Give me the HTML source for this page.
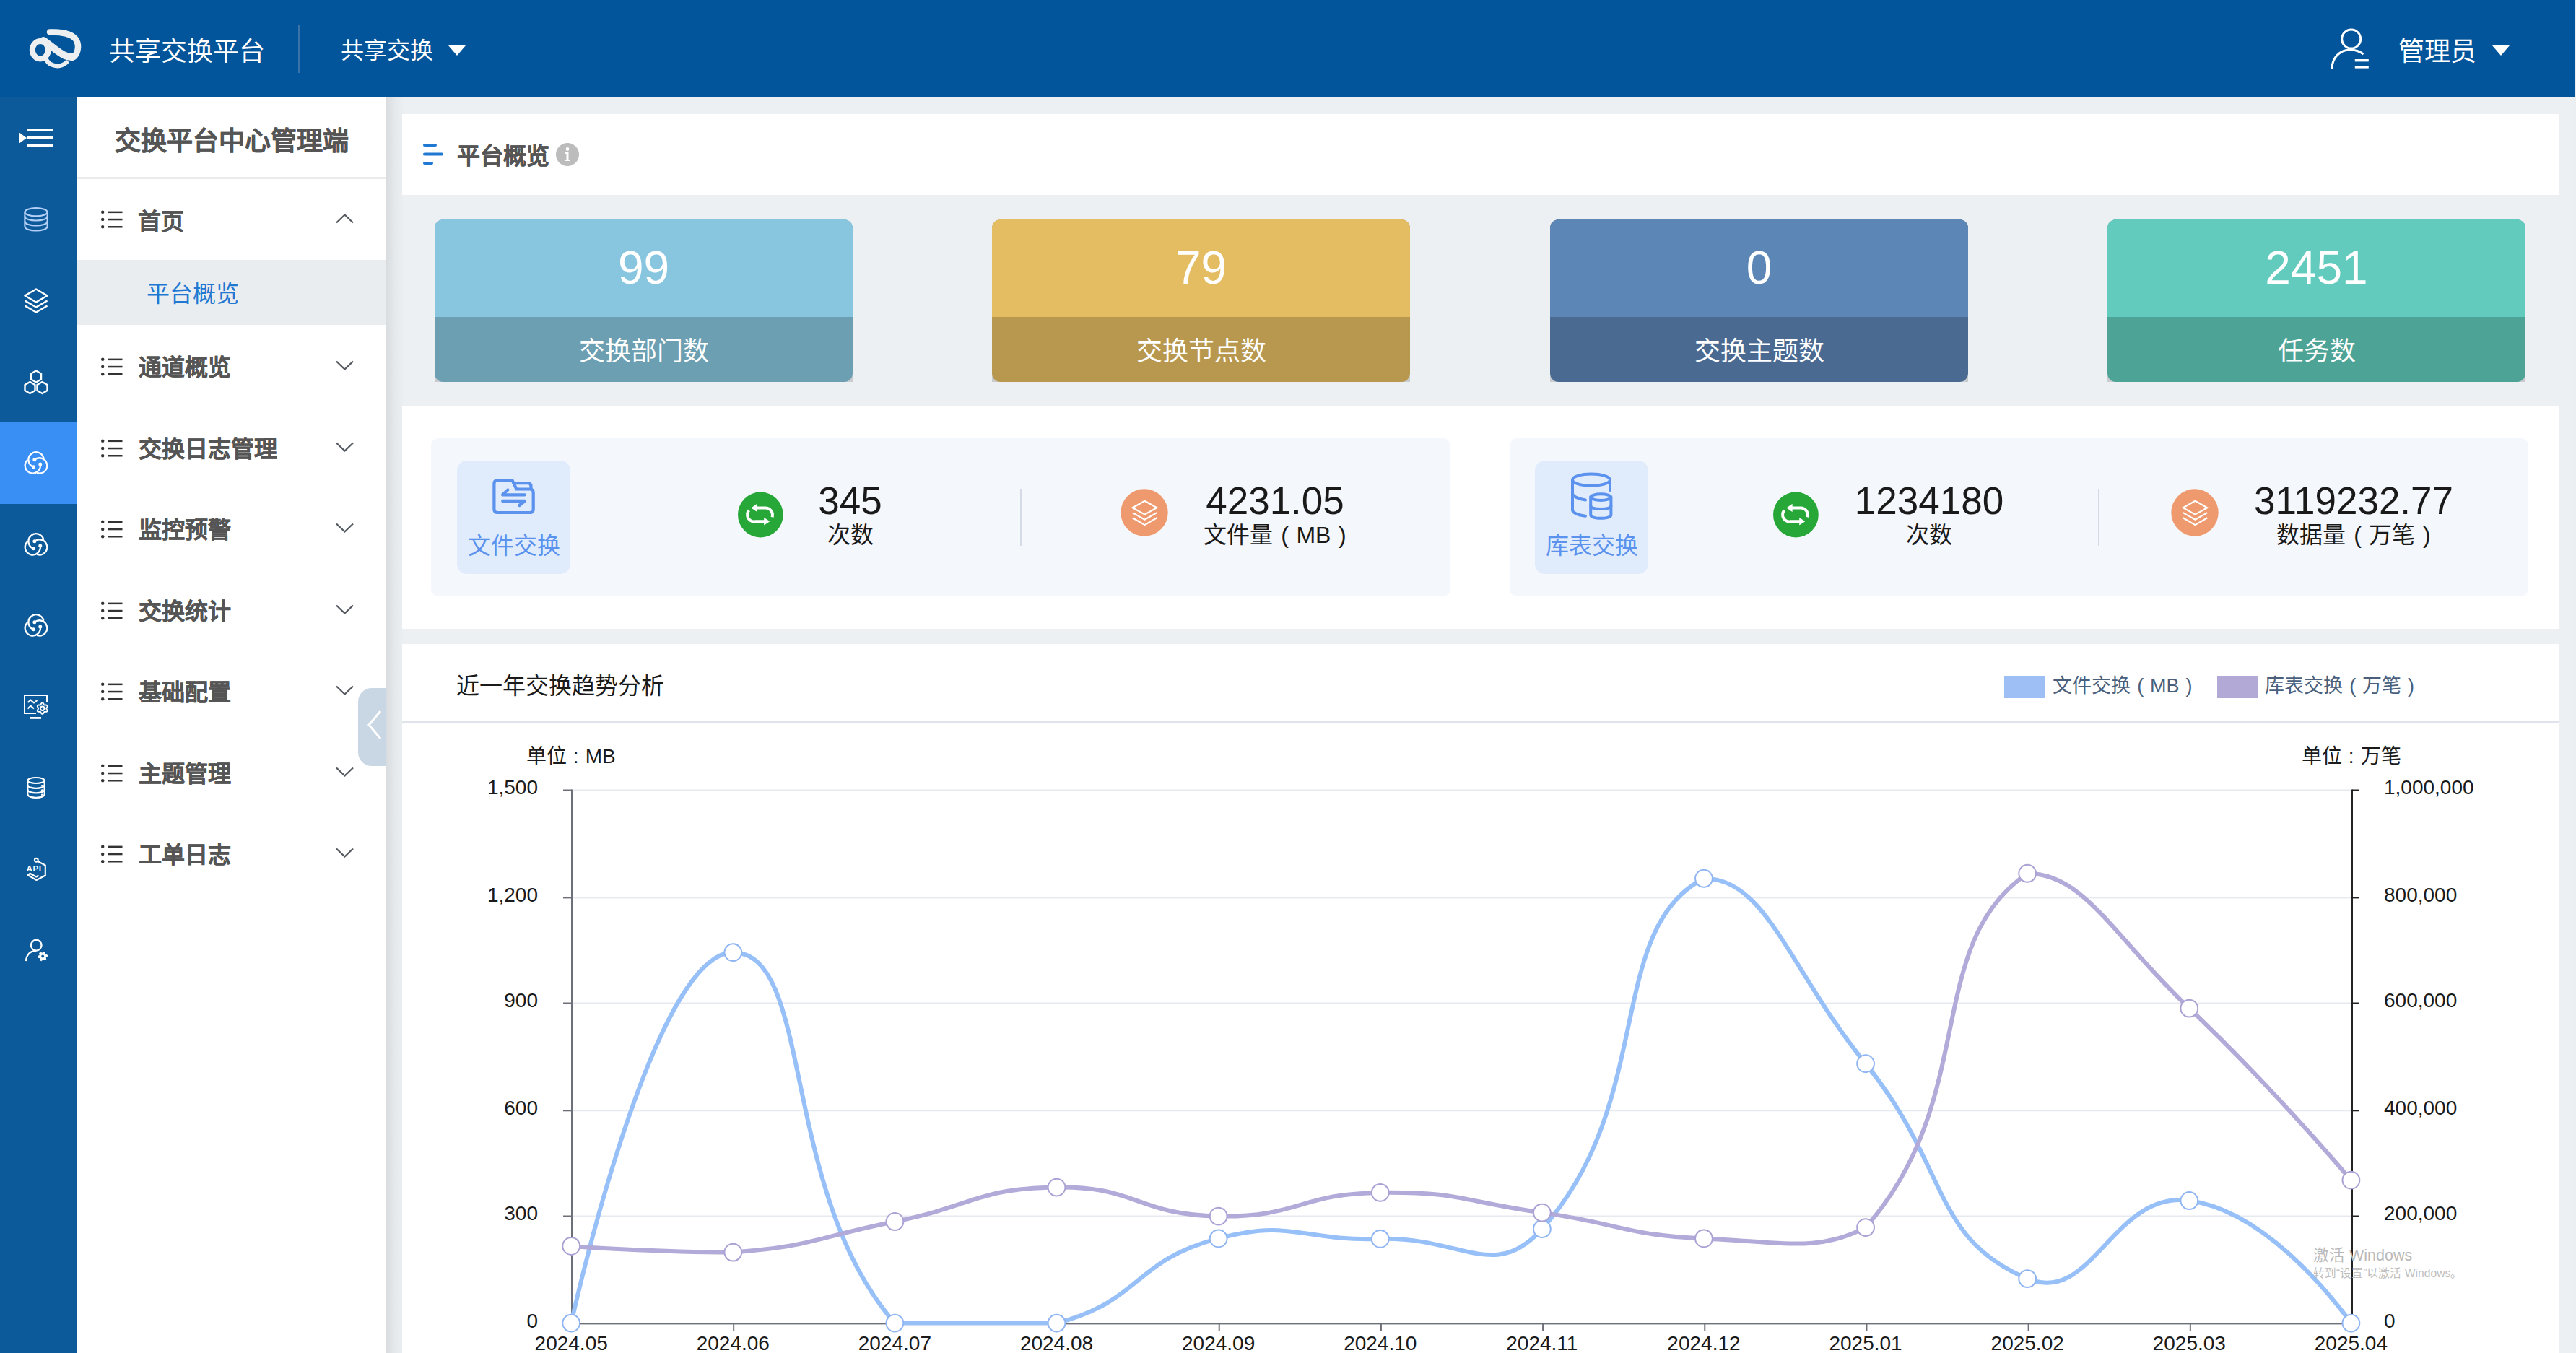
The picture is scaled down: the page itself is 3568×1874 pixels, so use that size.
<!DOCTYPE html>
<html lang="zh-CN"><head><meta charset="utf-8"><title>共享交换平台</title>
<style>
html,body{margin:0;padding:0;}
body{width:3568px;height:1874px;overflow:hidden;position:relative;background:#edf0f3;font-family:"Liberation Sans", sans-serif;}
.r{position:absolute;z-index:1}
.t{position:absolute;white-space:nowrap;line-height:1;z-index:6}
.pl{margin:0 0.33em 0 0.34em;} .pr{margin:0 0 0 0.33em;} .cl{margin:0 0.33em 0 0.31em;}
</style></head><body>
<div class="r" style="left:0px;top:0px;width:3566px;height:135px;background:#02559a;z-index:5"></div>
<div class="r" style="left:0px;top:134px;width:3566px;height:1px;background:#014b8c;z-index:5"></div>
<div class="r" style="left:3566px;top:0px;width:2px;height:1874px;background:#eceef0;z-index:5"></div>
<svg class="r" style="left:30px;top:30px;z-index:6" width="95" height="75" viewBox="30 30 95 75">
<g fill="none" stroke="#eceef0" stroke-linecap="round">
<ellipse cx="55.8" cy="69.3" rx="11" ry="12.2" stroke-width="8"/>
<path d="M60 56 C70 62 80 73 90 77 C95 79 99 79 102 78" stroke-width="10"/>
<path d="M69 44.5 C85 44 101 47 106 56 C110 64 108 76 100 80" stroke-width="8.5"/>
<path d="M63.5 81 C66 88 72 91 80 91.5 C85 91.5 89 89 92 86.5" stroke-width="6"/>
</g>
<path d="M67 41 C80 40 92 41 100 45 L96 49 C88 47 78 47 67 41 Z" fill="#eceef0"/>
</svg>
<div class="t" style="left:151px;top:54px;font-size:36px;color:#fff;font-weight:normal;">共享交换平台</div>
<div class="r" style="left:413px;top:34px;width:2px;height:67px;background:#3a72aa;z-index:6"></div>
<div class="t" style="left:472px;top:53.5px;font-size:32px;color:#fff;font-weight:normal;">共享交换</div>
<svg class="r" style="left:620px;top:62px;z-index:6" width="26" height="16"><path d="M1 1 L25 1 L13 15 Z" fill="#fff"/></svg>
<svg class="r" style="left:3225px;top:38px;z-index:6" width="62" height="62" viewBox="0 0 62 62">
<circle cx="31.7" cy="16" r="13" fill="none" stroke="#fff" stroke-width="3"/>
<path d="M5 57 C5 42 16 31 30 31 C38 31 44 33.5 48.6 37" fill="none" stroke="#fff" stroke-width="3"/>
<rect x="36.8" y="44" width="19" height="3.4" fill="#fff"/><rect x="36.8" y="53.4" width="19" height="3.2" fill="#fff"/>
</svg>
<div class="t" style="left:3322px;top:54px;font-size:36px;color:#fff;font-weight:normal;">管理员</div>
<svg class="r" style="left:3451px;top:62px;z-index:6" width="26" height="16"><path d="M1 1 L25 1 L13 15 Z" fill="#fff"/></svg>
<div class="r" style="left:0px;top:135px;width:107px;height:1739px;background:#0d5a9a;"></div>
<div class="r" style="left:0px;top:585px;width:107px;height:113px;background:#3a8ff5;"></div>
<svg class="r" style="left:0;top:135px" width="107" height="1739" viewBox="0 135 107 1739">
<path d="M26 183 L37 191 L26 199 Z" fill="#fff"/>
<rect x="38" y="178" width="36" height="4" fill="#fff"/><rect x="38" y="189" width="36" height="4" fill="#fff"/><rect x="38" y="200" width="36" height="4" fill="#fff"/>
<g fill="none" stroke="#b4d0f7" stroke-width="2.1">
<ellipse cx="50" cy="293.7" rx="15.6" ry="5.6"/>
<path d="M34.4 293.7 V313.5 C34.4 321.5 65.6 321.5 65.6 313.5 V293.7"/>
<path d="M34.4 299.5 C34.4 307.5 65.6 307.5 65.6 299.5"/>
<path d="M34.4 306.5 C34.4 314.5 65.6 314.5 65.6 306.5"/>
</g>
<g fill="none" stroke="#fff" stroke-width="2.6" stroke-linejoin="round">
<path d="M50 400.5 L65.5 409.5 L50 418.5 L34.5 409.5 Z"/>
<path d="M34.5 416.5 L50 425.5 L65.5 416.5"/>
<path d="M34.5 423.5 L50 432.5 L65.5 423.5"/>
</g>
<g fill="none" stroke="#fff" stroke-width="2.4" stroke-linejoin="round">
<path d="M50 513.5 L57 517.5 L57 525.5 L50 529.5 L43 525.5 L43 517.5 Z"/>
<path d="M41.5 529 L48.5 533 L48.5 541 L41.5 545 L34.5 541 L34.5 533 Z"/>
<path d="M58.5 529 L65.5 533 L65.5 541 L58.5 545 L51.5 541 L51.5 533 Z"/>
</g>
<path d="M46.37 646.76 A10.6 10.6 0 1 1 60.19 633.88" fill="none" stroke="#fff" stroke-width="2.3" stroke-linecap="round"/><circle cx="46.37" cy="646.76" r="2.5" fill="#fff"/><path d="M47.86 636.78 A10.6 10.6 0 1 1 52.11 655.19" fill="none" stroke="#fff" stroke-width="2.3" stroke-linecap="round"/><circle cx="47.86" cy="636.78" r="2.5" fill="#fff"/><path d="M55.76 643.06 A10.6 10.6 0 1 1 37.70 637.54" fill="none" stroke="#fff" stroke-width="2.3" stroke-linecap="round"/><circle cx="55.76" cy="643.06" r="2.5" fill="#fff"/>
<path d="M46.37 759.76 A10.6 10.6 0 1 1 60.19 746.88" fill="none" stroke="#fff" stroke-width="2.3" stroke-linecap="round"/><circle cx="46.37" cy="759.76" r="2.5" fill="#fff"/><path d="M47.86 749.78 A10.6 10.6 0 1 1 52.11 768.19" fill="none" stroke="#fff" stroke-width="2.3" stroke-linecap="round"/><circle cx="47.86" cy="749.78" r="2.5" fill="#fff"/><path d="M55.76 756.06 A10.6 10.6 0 1 1 37.70 750.54" fill="none" stroke="#fff" stroke-width="2.3" stroke-linecap="round"/><circle cx="55.76" cy="756.06" r="2.5" fill="#fff"/>
<path d="M46.37 871.76 A10.6 10.6 0 1 1 60.19 858.88" fill="none" stroke="#fff" stroke-width="2.3" stroke-linecap="round"/><circle cx="46.37" cy="871.76" r="2.5" fill="#fff"/><path d="M47.86 861.78 A10.6 10.6 0 1 1 52.11 880.19" fill="none" stroke="#fff" stroke-width="2.3" stroke-linecap="round"/><circle cx="47.86" cy="861.78" r="2.5" fill="#fff"/><path d="M55.76 868.06 A10.6 10.6 0 1 1 37.70 862.54" fill="none" stroke="#fff" stroke-width="2.3" stroke-linecap="round"/><circle cx="55.76" cy="868.06" r="2.5" fill="#fff"/>
<g fill="none" stroke="#fff" stroke-width="2">
<path d="M50 988 H34 V963 H65 V973"/>
<path d="M38.5 973 L42.5 969.5 L47 973.5 L51.5 970"/>
<path d="M38.5 981.5 L42.5 977.5 L47 981.5"/>
<circle cx="58.7" cy="981.2" r="2.8"/>
</g>
<path d="M58.70 988.90 L58.30 988.84 L57.92 988.65 L57.57 988.36 L57.26 987.99 L56.99 987.58 L56.77 987.15 L56.57 986.76 L56.38 986.42 L56.18 986.15 L55.95 985.96 L55.68 985.86 L55.34 985.82 L54.95 985.83 L54.51 985.85 L54.03 985.87 L53.54 985.84 L53.07 985.76 L52.64 985.60 L52.29 985.36 L52.03 985.05 L51.89 984.67 L51.86 984.25 L51.93 983.80 L52.10 983.34 L52.32 982.91 L52.58 982.50 L52.82 982.13 L53.02 981.80 L53.15 981.49 L53.20 981.20 L53.15 980.91 L53.02 980.60 L52.82 980.27 L52.58 979.90 L52.32 979.49 L52.10 979.06 L51.93 978.60 L51.86 978.15 L51.89 977.73 L52.03 977.35 L52.29 977.04 L52.64 976.80 L53.07 976.64 L53.54 976.56 L54.03 976.53 L54.51 976.55 L54.95 976.57 L55.34 976.58 L55.68 976.54 L55.95 976.44 L56.18 976.25 L56.38 975.98 L56.57 975.64 L56.77 975.25 L56.99 974.82 L57.26 974.41 L57.57 974.04 L57.92 973.75 L58.30 973.56 L58.70 973.50 L59.10 973.56 L59.48 973.75 L59.83 974.04 L60.14 974.41 L60.41 974.82 L60.63 975.25 L60.83 975.64 L61.02 975.98 L61.22 976.25 L61.45 976.44 L61.72 976.54 L62.06 976.58 L62.45 976.57 L62.89 976.55 L63.37 976.53 L63.86 976.56 L64.33 976.64 L64.76 976.80 L65.11 977.04 L65.37 977.35 L65.51 977.73 L65.54 978.15 L65.47 978.60 L65.30 979.06 L65.08 979.49 L64.82 979.90 L64.58 980.27 L64.38 980.60 L64.25 980.91 L64.20 981.20 L64.25 981.49 L64.38 981.80 L64.58 982.13 L64.82 982.50 L65.08 982.91 L65.30 983.34 L65.47 983.80 L65.54 984.25 L65.51 984.67 L65.37 985.05 L65.11 985.36 L64.76 985.60 L64.33 985.76 L63.86 985.84 L63.37 985.87 L62.89 985.85 L62.45 985.83 L62.06 985.82 L61.72 985.86 L61.45 985.96 L61.22 986.15 L61.02 986.42 L60.83 986.76 L60.63 987.15 L60.41 987.58 L60.14 987.99 L59.83 988.36 L59.48 988.65 L59.10 988.84 L58.70 988.90Z" fill="none" stroke="#fff" stroke-width="1.9" stroke-linejoin="round"/>
<rect x="42" y="993" width="15" height="2.8" fill="#fff"/>
<g fill="none" stroke="#fff" stroke-width="2.2">
<ellipse cx="50" cy="1081" rx="11.7" ry="4"/>
<path d="M38.3 1081 V1100 C38.3 1106.5 61.7 1106.5 61.7 1100 V1081"/>
<path d="M38.3 1087 C38.3 1093.5 61.7 1093.5 61.7 1087"/>
<path d="M38.3 1093.5 C38.3 1100 61.7 1100 61.7 1093.5"/>
</g>
<circle cx="58.2" cy="1088.2" r="1.3" fill="#fff"/><circle cx="58.2" cy="1094.5" r="1.3" fill="#fff"/><circle cx="58.2" cy="1100.8" r="1.3" fill="#fff"/>
<g fill="none" stroke="#fff" stroke-width="2.1" stroke-linejoin="round">
<circle cx="50.3" cy="1191.3" r="2.4"/>
<path d="M52.3 1193 L62.8 1198.5 V1212.5 L50.5 1219 L38.5 1212 L41.5 1209.8 L50.3 1214.5 L53.5 1212.5"/>
</g>
<text x="36.6" y="1207.4" font-family="Liberation Sans" font-weight="bold" font-size="11.6" fill="#fff" textLength="20.5">API</text>
<g fill="none" stroke="#fff" stroke-width="2.3">
<circle cx="50.2" cy="1309.3" r="7.3"/>
<path d="M35.8 1331 C37 1322 42 1317 50 1316.8"/>
</g>
<path d="M65.38 1322.84 L65.60 1324.50 L63.64 1325.69 L63.18 1326.80 L63.73 1329.03 L62.40 1330.04 L60.39 1328.94 L59.20 1329.10 L57.54 1330.68 L56.00 1330.04 L55.95 1327.75 L55.22 1326.80 L53.02 1326.16 L52.80 1324.50 L54.76 1323.31 L55.22 1322.20 L54.67 1319.97 L56.00 1318.96 L58.01 1320.06 L59.20 1319.90 L60.86 1318.32 L62.40 1318.96 L62.45 1321.25 L63.18 1322.20Z" fill="#fff" stroke="#fff" stroke-width="1" stroke-linejoin="round"/>
<circle cx="59.2" cy="1324.5" r="1.9" fill="#0d5a9a"/>
</svg>
<div class="r" style="left:107px;top:135px;width:427px;height:1739px;background:#fff;"></div>
<div class="r" style="left:534px;top:135px;width:26px;height:1739px;background:linear-gradient(to right, rgba(0,0,0,0.085), rgba(0,0,0,0.03) 50%, rgba(0,0,0,0));"></div>
<div class="r" style="left:107px;top:245px;width:427px;height:3px;background:#ebebeb;"></div>
<div class="t" style="left:159px;top:178px;font-size:36px;color:#555;font-weight:900;-webkit-text-stroke:0.3px #555">交换平台中心管理端</div>
<svg class="r" style="left:138px;top:290px" width="34" height="28" viewBox="0 0 34 28">
<circle cx="4.2" cy="3.8" r="2.2" fill="#333"/><circle cx="4.2" cy="14" r="2.2" fill="#333"/><circle cx="4.2" cy="24.2" r="2.2" fill="#333"/>
<rect x="11" y="2.6" width="20.5" height="2.5" fill="#333"/><rect x="11" y="12.8" width="20.5" height="2.5" fill="#333"/><rect x="11" y="23" width="20.5" height="2.5" fill="#333"/>
</svg>
<div class="t" style="left:191px;top:290.5px;font-size:32px;color:#555;font-weight:900;-webkit-text-stroke:0.3px #555">首页</div>
<svg class="r" style="left:464px;top:294.5px" width="28" height="16"><path d="M2 13.5 L13.5 2.5 L25 13.5" fill="none" stroke="#555a60" stroke-width="2.3"/></svg>
<div class="r" style="left:107px;top:360px;width:427px;height:90px;background:#e9edf0;"></div>
<div class="t" style="left:203px;top:390.5px;font-size:32px;color:#1f78d2;font-weight:normal;">平台概览</div>
<svg class="r" style="left:138px;top:494.0px" width="34" height="28" viewBox="0 0 34 28">
<circle cx="4.2" cy="3.8" r="2.2" fill="#333"/><circle cx="4.2" cy="14" r="2.2" fill="#333"/><circle cx="4.2" cy="24.2" r="2.2" fill="#333"/>
<rect x="11" y="2.6" width="20.5" height="2.5" fill="#333"/><rect x="11" y="12.8" width="20.5" height="2.5" fill="#333"/><rect x="11" y="23" width="20.5" height="2.5" fill="#333"/>
</svg>
<div class="t" style="left:192px;top:493.0px;font-size:32px;color:#555;font-weight:900;-webkit-text-stroke:0.3px #555">通道概览</div>
<svg class="r" style="left:464px;top:498.0px" width="28" height="16"><path d="M2 2.5 L13.5 13.5 L25 2.5" fill="none" stroke="#555a60" stroke-width="2.3"/></svg>
<svg class="r" style="left:138px;top:606.5px" width="34" height="28" viewBox="0 0 34 28">
<circle cx="4.2" cy="3.8" r="2.2" fill="#333"/><circle cx="4.2" cy="14" r="2.2" fill="#333"/><circle cx="4.2" cy="24.2" r="2.2" fill="#333"/>
<rect x="11" y="2.6" width="20.5" height="2.5" fill="#333"/><rect x="11" y="12.8" width="20.5" height="2.5" fill="#333"/><rect x="11" y="23" width="20.5" height="2.5" fill="#333"/>
</svg>
<div class="t" style="left:192px;top:605.5px;font-size:32px;color:#555;font-weight:900;-webkit-text-stroke:0.3px #555">交换日志管理</div>
<svg class="r" style="left:464px;top:610.5px" width="28" height="16"><path d="M2 2.5 L13.5 13.5 L25 2.5" fill="none" stroke="#555a60" stroke-width="2.3"/></svg>
<svg class="r" style="left:138px;top:719.0px" width="34" height="28" viewBox="0 0 34 28">
<circle cx="4.2" cy="3.8" r="2.2" fill="#333"/><circle cx="4.2" cy="14" r="2.2" fill="#333"/><circle cx="4.2" cy="24.2" r="2.2" fill="#333"/>
<rect x="11" y="2.6" width="20.5" height="2.5" fill="#333"/><rect x="11" y="12.8" width="20.5" height="2.5" fill="#333"/><rect x="11" y="23" width="20.5" height="2.5" fill="#333"/>
</svg>
<div class="t" style="left:192px;top:718.0px;font-size:32px;color:#555;font-weight:900;-webkit-text-stroke:0.3px #555">监控预警</div>
<svg class="r" style="left:464px;top:723.0px" width="28" height="16"><path d="M2 2.5 L13.5 13.5 L25 2.5" fill="none" stroke="#555a60" stroke-width="2.3"/></svg>
<svg class="r" style="left:138px;top:831.5px" width="34" height="28" viewBox="0 0 34 28">
<circle cx="4.2" cy="3.8" r="2.2" fill="#333"/><circle cx="4.2" cy="14" r="2.2" fill="#333"/><circle cx="4.2" cy="24.2" r="2.2" fill="#333"/>
<rect x="11" y="2.6" width="20.5" height="2.5" fill="#333"/><rect x="11" y="12.8" width="20.5" height="2.5" fill="#333"/><rect x="11" y="23" width="20.5" height="2.5" fill="#333"/>
</svg>
<div class="t" style="left:192px;top:830.5px;font-size:32px;color:#555;font-weight:900;-webkit-text-stroke:0.3px #555">交换统计</div>
<svg class="r" style="left:464px;top:835.5px" width="28" height="16"><path d="M2 2.5 L13.5 13.5 L25 2.5" fill="none" stroke="#555a60" stroke-width="2.3"/></svg>
<svg class="r" style="left:138px;top:944.0px" width="34" height="28" viewBox="0 0 34 28">
<circle cx="4.2" cy="3.8" r="2.2" fill="#333"/><circle cx="4.2" cy="14" r="2.2" fill="#333"/><circle cx="4.2" cy="24.2" r="2.2" fill="#333"/>
<rect x="11" y="2.6" width="20.5" height="2.5" fill="#333"/><rect x="11" y="12.8" width="20.5" height="2.5" fill="#333"/><rect x="11" y="23" width="20.5" height="2.5" fill="#333"/>
</svg>
<div class="t" style="left:192px;top:943.0px;font-size:32px;color:#555;font-weight:900;-webkit-text-stroke:0.3px #555">基础配置</div>
<svg class="r" style="left:464px;top:948.0px" width="28" height="16"><path d="M2 2.5 L13.5 13.5 L25 2.5" fill="none" stroke="#555a60" stroke-width="2.3"/></svg>
<svg class="r" style="left:138px;top:1056.5px" width="34" height="28" viewBox="0 0 34 28">
<circle cx="4.2" cy="3.8" r="2.2" fill="#333"/><circle cx="4.2" cy="14" r="2.2" fill="#333"/><circle cx="4.2" cy="24.2" r="2.2" fill="#333"/>
<rect x="11" y="2.6" width="20.5" height="2.5" fill="#333"/><rect x="11" y="12.8" width="20.5" height="2.5" fill="#333"/><rect x="11" y="23" width="20.5" height="2.5" fill="#333"/>
</svg>
<div class="t" style="left:192px;top:1055.5px;font-size:32px;color:#555;font-weight:900;-webkit-text-stroke:0.3px #555">主题管理</div>
<svg class="r" style="left:464px;top:1060.5px" width="28" height="16"><path d="M2 2.5 L13.5 13.5 L25 2.5" fill="none" stroke="#555a60" stroke-width="2.3"/></svg>
<svg class="r" style="left:138px;top:1169.0px" width="34" height="28" viewBox="0 0 34 28">
<circle cx="4.2" cy="3.8" r="2.2" fill="#333"/><circle cx="4.2" cy="14" r="2.2" fill="#333"/><circle cx="4.2" cy="24.2" r="2.2" fill="#333"/>
<rect x="11" y="2.6" width="20.5" height="2.5" fill="#333"/><rect x="11" y="12.8" width="20.5" height="2.5" fill="#333"/><rect x="11" y="23" width="20.5" height="2.5" fill="#333"/>
</svg>
<div class="t" style="left:192px;top:1168.0px;font-size:32px;color:#555;font-weight:900;-webkit-text-stroke:0.3px #555">工单日志</div>
<svg class="r" style="left:464px;top:1173.0px" width="28" height="16"><path d="M2 2.5 L13.5 13.5 L25 2.5" fill="none" stroke="#555a60" stroke-width="2.3"/></svg>
<div class="r" style="left:496px;top:953px;width:38px;height:108px;background:#c9d6e3;border-radius:19px 0 0 19px"></div>
<svg class="r" style="left:505px;top:982px" width="26" height="46"><path d="M22 3 L6 22 L22 41" fill="none" stroke="#fff" stroke-width="3"/></svg>
<div class="r" style="left:557px;top:158px;width:2987px;height:112px;background:#fff;"></div>
<svg class="r" style="left:584px;top:197px" width="34" height="34">
<rect x="2" y="2" width="19" height="4" rx="2" fill="#1f78d2"/><rect x="2" y="14.5" width="28" height="4" rx="2" fill="#1f78d2"/><rect x="2" y="27" width="14" height="4" rx="2" fill="#1f78d2"/></svg>
<div class="t" style="left:633px;top:200px;font-size:32px;color:#555;font-weight:900;-webkit-text-stroke:0.3px #555">平台概览</div>
<svg class="r" style="left:770px;top:198px" width="32" height="32"><circle cx="16" cy="16" r="16" fill="#bcbcbc"/><circle cx="16" cy="8.5" r="2.4" fill="#fff"/><path d="M12.5 13 H17.5 V23 H19.5 V25 H12.5 V23 H14.5 V15 H12.5 Z" fill="#fff"/></svg>
<div class="r" style="left:602px;top:516px;width:579px;height:13px;background:#c9cccf;"></div>
<div class="r" style="left:602px;top:304px;width:579px;height:225px;border-radius:12px;overflow:hidden;background:#6c9fb2;"><div class="r" style="left:0;top:0;width:579px;height:135px;background:#88c6e0"></div></div>
<div class="t" style="left:591.5px;top:339px;width:600px;text-align:center;font-size:64px;color:#fff;font-weight:normal;">99</div>
<div class="t" style="left:591.5px;top:468.5px;width:600px;text-align:center;font-size:36px;color:#fff;font-weight:normal;">交换部门数</div>
<div class="r" style="left:1374px;top:516px;width:579px;height:13px;background:#c9cccf;"></div>
<div class="r" style="left:1374px;top:304px;width:579px;height:225px;border-radius:12px;overflow:hidden;background:#b8984e;"><div class="r" style="left:0;top:0;width:579px;height:135px;background:#e4bd63"></div></div>
<div class="t" style="left:1363.5px;top:339px;width:600px;text-align:center;font-size:64px;color:#fff;font-weight:normal;">79</div>
<div class="t" style="left:1363.5px;top:468.5px;width:600px;text-align:center;font-size:36px;color:#fff;font-weight:normal;">交换节点数</div>
<div class="r" style="left:2147px;top:516px;width:579px;height:13px;background:#c9cccf;"></div>
<div class="r" style="left:2147px;top:304px;width:579px;height:225px;border-radius:12px;overflow:hidden;background:#4a6a91;"><div class="r" style="left:0;top:0;width:579px;height:135px;background:#5b86b5"></div></div>
<div class="t" style="left:2136.5px;top:339px;width:600px;text-align:center;font-size:64px;color:#fff;font-weight:normal;">0</div>
<div class="t" style="left:2136.5px;top:468.5px;width:600px;text-align:center;font-size:36px;color:#fff;font-weight:normal;">交换主题数</div>
<div class="r" style="left:2919px;top:516px;width:579px;height:13px;background:#c9cccf;"></div>
<div class="r" style="left:2919px;top:304px;width:579px;height:225px;border-radius:12px;overflow:hidden;background:#4ea397;"><div class="r" style="left:0;top:0;width:579px;height:135px;background:#62cbbd"></div></div>
<div class="t" style="left:2908.5px;top:339px;width:600px;text-align:center;font-size:64px;color:#fff;font-weight:normal;">2451</div>
<div class="t" style="left:2908.5px;top:468.5px;width:600px;text-align:center;font-size:36px;color:#fff;font-weight:normal;">任务数</div>
<div class="r" style="left:557px;top:563px;width:2987px;height:308px;background:#fff;"></div>
<div class="r" style="left:597px;top:607px;width:1412px;height:219px;background:#f4f7fc;border-radius:10px"></div>
<div class="r" style="left:633px;top:638px;width:157px;height:157px;background:#e0ebfb;border-radius:14px"></div>
<svg class="r" style="left:676px;top:655px" width="70" height="65" viewBox="676 655 70 65">
<g fill="none" stroke="#5b92ee" stroke-width="4.2" stroke-linecap="round" stroke-linejoin="round">
<path d="M715.4 677.5 L709.6 665.3 H689 Q684.4 665.3 684.4 670 V705.5 Q684.4 710 689 710 H734.2 Q738.7 710 738.7 705.5 V682 Q738.7 677.5 734.2 677.5 Z"/>
<path d="M711.6 669.2 H731 Q735.5 669.2 735.5 673.7 V677"/>
<path d="M696 685.3 H726.9 M696 685.3 L703.4 678.5"/>
<path d="M696.2 693.9 H726.9 L719.4 700"/>
</g></svg>
<div class="t" style="left:611.5px;top:740px;width:200px;text-align:center;font-size:32px;color:#5b92ee;font-weight:normal;">文件交换</div>
<svg class="r" style="left:1020.1px;top:679.6px" width="66" height="66" viewBox="1020 679.6 66 66">
<circle cx="1053.4" cy="712.6" r="31.4" fill="#27a737"/>
<path d="M1047 703 H1060 A10 10 0 0 1 1069.5 716" fill="none" stroke="#fff" stroke-width="4"/>
<path d="M1040.4 703 L1048.6 697.4 V708.6 Z" fill="#fff"/>
<path d="M1059.8 721.8 H1046.6 A9.4 9.4 0 0 1 1037.4 706.5" fill="none" stroke="#fff" stroke-width="4"/>
<path d="M1066.2 721.8 L1058.2 716.4 V727.2 Z" fill="#fff"/>
</svg>
<div class="t" style="left:977.5px;top:667px;width:400px;text-align:center;font-size:53px;color:#1a1a1a;font-weight:normal;">345</div>
<div class="t" style="left:977.5px;top:724.5px;width:400px;text-align:center;font-size:32px;color:#1a1a1a;font-weight:normal;">次数</div>
<div class="r" style="left:1413px;top:677px;width:2px;height:79px;background:#d5dbe6;"></div>
<svg class="r" style="left:1551.5px;top:676.5px" width="66" height="66" viewBox="1552 676.5 66 66">
<circle cx="1585" cy="709.5" r="32.7" fill="#ef9a6e"/>
<g fill="none" stroke="#fff" stroke-width="2.2" stroke-linejoin="miter">
<path d="M1585.5 693.2 L1602.3 702.7 L1585.5 712.1 L1568.7 702.7 Z"/><path d="M1568.7 709.6 L1585.5 719.2 L1602.3 709.6"/><path d="M1568.7 716.8 L1585.5 726.6 L1602.3 716.8"/></g>
</svg>
<div class="t" style="left:1516.0px;top:667px;width:500px;text-align:center;font-size:53px;color:#1a1a1a;font-weight:normal;">4231.05</div>
<div class="t" style="left:1516.0px;top:724.5px;width:500px;text-align:center;font-size:32px;color:#1a1a1a;font-weight:normal;">文件量<span class=pl>(</span>MB<span class=pr>)</span></div>
<div class="r" style="left:2091px;top:607px;width:1411px;height:219px;background:#f4f7fc;border-radius:10px"></div>
<div class="r" style="left:2126px;top:638px;width:157px;height:157px;background:#e0ebfb;border-radius:14px"></div>
<svg class="r" style="left:2168px;top:648px" width="74" height="78" viewBox="2168 648 74 78">
<g fill="none" stroke="#5b92ee" stroke-width="4" stroke-linecap="round">
<ellipse cx="2204" cy="664.6" rx="26" ry="8.2"/>
<path d="M2230 664.6 V679"/>
<path d="M2178 664.6 V706 C2178 710.5 2186 713.5 2196 714.8"/>
<path d="M2178 683 C2178 687.5 2186 691 2196 692.4"/>
<ellipse cx="2217.3" cy="688.6" rx="14.1" ry="4.3"/>
<path d="M2203.2 688.6 V713 C2203.2 716 2209 717.8 2217.3 717.8 C2225.6 717.8 2231.4 716 2231.4 713 V688.6"/>
<path d="M2203.2 700.5 C2203.2 703.5 2209 705 2217.3 705 C2225.6 705 2231.4 703.5 2231.4 700.5"/>
</g></svg>
<div class="t" style="left:2104.5px;top:740px;width:200px;text-align:center;font-size:32px;color:#5b92ee;font-weight:normal;">库表交换</div>
<svg class="r" style="left:2453.6px;top:679.6px" width="66" height="66" viewBox="1020 679.6 66 66">
<circle cx="1053.4" cy="712.6" r="31.4" fill="#27a737"/>
<path d="M1047 703 H1060 A10 10 0 0 1 1069.5 716" fill="none" stroke="#fff" stroke-width="4"/>
<path d="M1040.4 703 L1048.6 697.4 V708.6 Z" fill="#fff"/>
<path d="M1059.8 721.8 H1046.6 A9.4 9.4 0 0 1 1037.4 706.5" fill="none" stroke="#fff" stroke-width="4"/>
<path d="M1066.2 721.8 L1058.2 716.4 V727.2 Z" fill="#fff"/>
</svg>
<div class="t" style="left:2472.0px;top:667px;width:400px;text-align:center;font-size:53px;color:#1a1a1a;font-weight:normal;">1234180</div>
<div class="t" style="left:2472.0px;top:724.5px;width:400px;text-align:center;font-size:32px;color:#1a1a1a;font-weight:normal;">次数</div>
<div class="r" style="left:2906px;top:677px;width:2px;height:79px;background:#d5dbe6;"></div>
<svg class="r" style="left:3007px;top:676.5px" width="66" height="66" viewBox="1552 676.5 66 66">
<circle cx="1585" cy="709.5" r="32.7" fill="#ef9a6e"/>
<g fill="none" stroke="#fff" stroke-width="2.2" stroke-linejoin="miter">
<path d="M1585.5 693.2 L1602.3 702.7 L1585.5 712.1 L1568.7 702.7 Z"/><path d="M1568.7 709.6 L1585.5 719.2 L1602.3 709.6"/><path d="M1568.7 716.8 L1585.5 726.6 L1602.3 716.8"/></g>
</svg>
<div class="t" style="left:3010.0px;top:667px;width:500px;text-align:center;font-size:53px;color:#1a1a1a;font-weight:normal;">3119232.77</div>
<div class="t" style="left:3010.0px;top:724.5px;width:500px;text-align:center;font-size:32px;color:#1a1a1a;font-weight:normal;">数据量<span class=pl>(</span>万笔<span class=pr>)</span></div>
<div class="r" style="left:557px;top:892px;width:2987px;height:982px;background:#fff;"></div>
<div class="t" style="left:632px;top:934px;font-size:32px;color:#1a1a1a;font-weight:normal;">近一年交换趋势分析</div>
<div class="r" style="left:557px;top:999px;width:2987px;height:2px;background:#dfe4ec;"></div>
<div class="r" style="left:2776px;top:936px;width:56px;height:31px;background:#9dbff5;"></div>
<div class="t" style="left:2843px;top:936.5px;font-size:27px;color:#4a5f7c;font-weight:normal;">文件交换<span class=pl>(</span>MB<span class=pr>)</span></div>
<div class="r" style="left:3071px;top:936px;width:56px;height:31px;background:#b3a9d6;"></div>
<div class="t" style="left:3137px;top:936.5px;font-size:27px;color:#4a5f7c;font-weight:normal;">库表交换<span class=pl>(</span>万笔<span class=pr>)</span></div>
<div class="t" style="left:729px;top:1033.5px;font-size:28px;color:#1a1a1a;font-weight:normal;">单位<span class=cl>:</span>MB</div>
<div class="t" style="left:3188px;top:1033.5px;font-size:28px;color:#1a1a1a;font-weight:normal;">单位<span class=cl>:</span>万笔</div>
<svg class="r" style="left:0;top:0" width="3568" height="1874" viewBox="0 0 3568 1874">
<rect x="780.0" y="1832.4" width="12" height="2" fill="#6e7079"/>
<rect x="3258.0" y="1832.4" width="10" height="2" fill="#222"/>
<rect x="793.0" y="1683.5" width="2465.0" height="2" fill="#e6eaf0"/>
<rect x="780.0" y="1683.5" width="12" height="2" fill="#6e7079"/>
<rect x="3258.0" y="1683.5" width="10" height="2" fill="#222"/>
<rect x="793.0" y="1537.3" width="2465.0" height="2" fill="#e6eaf0"/>
<rect x="780.0" y="1537.3" width="12" height="2" fill="#6e7079"/>
<rect x="3258.0" y="1537.3" width="10" height="2" fill="#222"/>
<rect x="793.0" y="1388.5" width="2465.0" height="2" fill="#e6eaf0"/>
<rect x="780.0" y="1388.5" width="12" height="2" fill="#6e7079"/>
<rect x="3258.0" y="1388.5" width="10" height="2" fill="#222"/>
<rect x="793.0" y="1242.4" width="2465.0" height="2" fill="#e6eaf0"/>
<rect x="780.0" y="1242.4" width="12" height="2" fill="#6e7079"/>
<rect x="3258.0" y="1242.4" width="10" height="2" fill="#222"/>
<rect x="793.0" y="1093.5" width="2465.0" height="2" fill="#e6eaf0"/>
<rect x="780.0" y="1093.5" width="12" height="2" fill="#6e7079"/>
<rect x="3258.0" y="1093.5" width="10" height="2" fill="#222"/>
<rect x="791.0" y="1093.5" width="2" height="740.9000000000001" fill="#6e7079"/>
<rect x="3257.0" y="1093.5" width="2" height="740.9000000000001" fill="#222"/>
<rect x="791.0" y="1832.4" width="2468.0" height="2" fill="#6e7079"/>
<rect x="791.0" y="1833.4" width="2" height="10" fill="#6e7079"/>
<rect x="1015.1818181818182" y="1833.4" width="2" height="10" fill="#6e7079"/>
<rect x="1239.3636363636365" y="1833.4" width="2" height="10" fill="#6e7079"/>
<rect x="1463.5454545454545" y="1833.4" width="2" height="10" fill="#6e7079"/>
<rect x="1687.7272727272727" y="1833.4" width="2" height="10" fill="#6e7079"/>
<rect x="1911.909090909091" y="1833.4" width="2" height="10" fill="#6e7079"/>
<rect x="2136.090909090909" y="1833.4" width="2" height="10" fill="#6e7079"/>
<rect x="2360.272727272727" y="1833.4" width="2" height="10" fill="#6e7079"/>
<rect x="2584.4545454545455" y="1833.4" width="2" height="10" fill="#6e7079"/>
<rect x="2808.636363636364" y="1833.4" width="2" height="10" fill="#6e7079"/>
<rect x="3032.818181818182" y="1833.4" width="2" height="10" fill="#6e7079"/>
<rect x="3257.0" y="1833.4" width="2" height="10" fill="#6e7079"/>
<path d="M791.20 1832.60 C791.20 1832.60 903.26 1319.17 1015.31 1319.17 C1127.37 1319.17 1079.35 1649.24 1239.42 1832.60 C1303.46 1832.60 1358.24 1832.60 1463.53 1832.60 C1582.35 1801.54 1568.82 1746.37 1687.64 1715.44 C1792.93 1688.03 1799.80 1719.25 1911.75 1715.93 C2023.91 1712.61 2069.58 1775.97 2135.86 1702.15 C2293.69 1526.39 2223.07 1286.69 2359.97 1216.77 C2447.18 1216.77 2477.07 1340.91 2584.08 1473.25 C2701.18 1618.06 2673.79 1714.16 2808.19 1771.07 C2897.90 1809.05 2927.06 1648.57 3032.30 1663.01 C3151.17 1679.33 3256.41 1832.60 3256.41 1832.60" fill="none" stroke="#98c0f8" stroke-width="6" stroke-linejoin="round"/>
<path d="M791.20 1725.98 C791.20 1725.98 904.21 1734.54 1015.31 1734.54 C1128.32 1725.98 1127.60 1714.46 1239.42 1692.01 C1351.71 1669.46 1351.12 1646.40 1463.53 1644.53 C1575.23 1642.67 1575.29 1682.70 1687.64 1684.55 C1799.40 1686.39 1799.53 1653.15 1911.75 1651.91 C2023.64 1650.68 2024.09 1663.77 2135.86 1679.60 C2248.20 1695.52 2247.34 1710.28 2359.97 1715.42 C2471.45 1720.50 2518.16 1734.54 2584.08 1700.06 C2742.27 1521.59 2662.78 1308.22 2808.19 1209.76 C2886.89 1209.76 2926.63 1296.39 3032.30 1396.57 C3150.74 1508.86 3256.41 1634.71 3256.41 1634.71" fill="none" stroke="#b2aad8" stroke-width="6" stroke-linejoin="round"/>
<circle cx="791.20" cy="1832.60" r="11.9" fill="#fff" stroke="#8fb5f3" stroke-width="2"/>
<circle cx="1015.31" cy="1319.17" r="11.9" fill="#fff" stroke="#8fb5f3" stroke-width="2"/>
<circle cx="1239.42" cy="1832.60" r="11.9" fill="#fff" stroke="#8fb5f3" stroke-width="2"/>
<circle cx="1463.53" cy="1832.60" r="11.9" fill="#fff" stroke="#8fb5f3" stroke-width="2"/>
<circle cx="1687.64" cy="1715.44" r="11.9" fill="#fff" stroke="#8fb5f3" stroke-width="2"/>
<circle cx="1911.75" cy="1715.93" r="11.9" fill="#fff" stroke="#8fb5f3" stroke-width="2"/>
<circle cx="2135.86" cy="1702.15" r="11.9" fill="#fff" stroke="#8fb5f3" stroke-width="2"/>
<circle cx="2359.97" cy="1216.77" r="11.9" fill="#fff" stroke="#8fb5f3" stroke-width="2"/>
<circle cx="2584.08" cy="1473.25" r="11.9" fill="#fff" stroke="#8fb5f3" stroke-width="2"/>
<circle cx="2808.19" cy="1771.07" r="11.9" fill="#fff" stroke="#8fb5f3" stroke-width="2"/>
<circle cx="3032.30" cy="1663.01" r="11.9" fill="#fff" stroke="#8fb5f3" stroke-width="2"/>
<circle cx="3256.41" cy="1832.60" r="11.9" fill="#fff" stroke="#8fb5f3" stroke-width="2"/>
<circle cx="791.20" cy="1725.98" r="11.9" fill="#fff" stroke="#aaa1d4" stroke-width="2"/>
<circle cx="1015.31" cy="1734.54" r="11.9" fill="#fff" stroke="#aaa1d4" stroke-width="2"/>
<circle cx="1239.42" cy="1692.01" r="11.9" fill="#fff" stroke="#aaa1d4" stroke-width="2"/>
<circle cx="1463.53" cy="1644.53" r="11.9" fill="#fff" stroke="#aaa1d4" stroke-width="2"/>
<circle cx="1687.64" cy="1684.55" r="11.9" fill="#fff" stroke="#aaa1d4" stroke-width="2"/>
<circle cx="1911.75" cy="1651.91" r="11.9" fill="#fff" stroke="#aaa1d4" stroke-width="2"/>
<circle cx="2135.86" cy="1679.60" r="11.9" fill="#fff" stroke="#aaa1d4" stroke-width="2"/>
<circle cx="2359.97" cy="1715.42" r="11.9" fill="#fff" stroke="#aaa1d4" stroke-width="2"/>
<circle cx="2584.08" cy="1700.06" r="11.9" fill="#fff" stroke="#aaa1d4" stroke-width="2"/>
<circle cx="2808.19" cy="1209.76" r="11.9" fill="#fff" stroke="#aaa1d4" stroke-width="2"/>
<circle cx="3032.30" cy="1396.57" r="11.9" fill="#fff" stroke="#aaa1d4" stroke-width="2"/>
<circle cx="3256.41" cy="1634.71" r="11.9" fill="#fff" stroke="#aaa1d4" stroke-width="2"/>
</svg>
<div class="t" style="left:445px;top:1815.9px;width:300px;text-align:right;font-size:28px;color:#1a1a1a;">0</div>
<div class="t" style="left:3302px;top:1815.9px;font-size:28px;color:#1a1a1a;font-weight:normal;">0</div>
<div class="t" style="left:445px;top:1667.0px;width:300px;text-align:right;font-size:28px;color:#1a1a1a;">300</div>
<div class="t" style="left:3302px;top:1667.0px;font-size:28px;color:#1a1a1a;font-weight:normal;">200,000</div>
<div class="t" style="left:445px;top:1520.8px;width:300px;text-align:right;font-size:28px;color:#1a1a1a;">600</div>
<div class="t" style="left:3302px;top:1520.8px;font-size:28px;color:#1a1a1a;font-weight:normal;">400,000</div>
<div class="t" style="left:445px;top:1372.0px;width:300px;text-align:right;font-size:28px;color:#1a1a1a;">900</div>
<div class="t" style="left:3302px;top:1372.0px;font-size:28px;color:#1a1a1a;font-weight:normal;">600,000</div>
<div class="t" style="left:445px;top:1225.9px;width:300px;text-align:right;font-size:28px;color:#1a1a1a;">1,200</div>
<div class="t" style="left:3302px;top:1225.9px;font-size:28px;color:#1a1a1a;font-weight:normal;">800,000</div>
<div class="t" style="left:445px;top:1077.0px;width:300px;text-align:right;font-size:28px;color:#1a1a1a;">1,500</div>
<div class="t" style="left:3302px;top:1077.0px;font-size:28px;color:#1a1a1a;font-weight:normal;">1,000,000</div>
<div class="t" style="left:691.2px;top:1847px;width:200px;text-align:center;font-size:28px;color:#1a1a1a;font-weight:normal;">2024.05</div>
<div class="t" style="left:915.3100000000001px;top:1847px;width:200px;text-align:center;font-size:28px;color:#1a1a1a;font-weight:normal;">2024.06</div>
<div class="t" style="left:1139.42px;top:1847px;width:200px;text-align:center;font-size:28px;color:#1a1a1a;font-weight:normal;">2024.07</div>
<div class="t" style="left:1363.5300000000002px;top:1847px;width:200px;text-align:center;font-size:28px;color:#1a1a1a;font-weight:normal;">2024.08</div>
<div class="t" style="left:1587.64px;top:1847px;width:200px;text-align:center;font-size:28px;color:#1a1a1a;font-weight:normal;">2024.09</div>
<div class="t" style="left:1811.7500000000002px;top:1847px;width:200px;text-align:center;font-size:28px;color:#1a1a1a;font-weight:normal;">2024.10</div>
<div class="t" style="left:2035.8600000000001px;top:1847px;width:200px;text-align:center;font-size:28px;color:#1a1a1a;font-weight:normal;">2024.11</div>
<div class="t" style="left:2259.9700000000003px;top:1847px;width:200px;text-align:center;font-size:28px;color:#1a1a1a;font-weight:normal;">2024.12</div>
<div class="t" style="left:2484.08px;top:1847px;width:200px;text-align:center;font-size:28px;color:#1a1a1a;font-weight:normal;">2025.01</div>
<div class="t" style="left:2708.1900000000005px;top:1847px;width:200px;text-align:center;font-size:28px;color:#1a1a1a;font-weight:normal;">2025.02</div>
<div class="t" style="left:2932.3px;top:1847px;width:200px;text-align:center;font-size:28px;color:#1a1a1a;font-weight:normal;">2025.03</div>
<div class="t" style="left:3156.41px;top:1847px;width:200px;text-align:center;font-size:28px;color:#1a1a1a;font-weight:normal;">2025.04</div>
<div class="t" style="left:3204px;top:1729px;font-size:21.5px;color:#b9b9b9;font-weight:300;">激活 Windows</div>
<div class="t" style="left:3204px;top:1756px;font-size:15.7px;color:#bdbdbd;font-weight:300;">转到“设置”以激活 Windows。</div>
</body></html>
